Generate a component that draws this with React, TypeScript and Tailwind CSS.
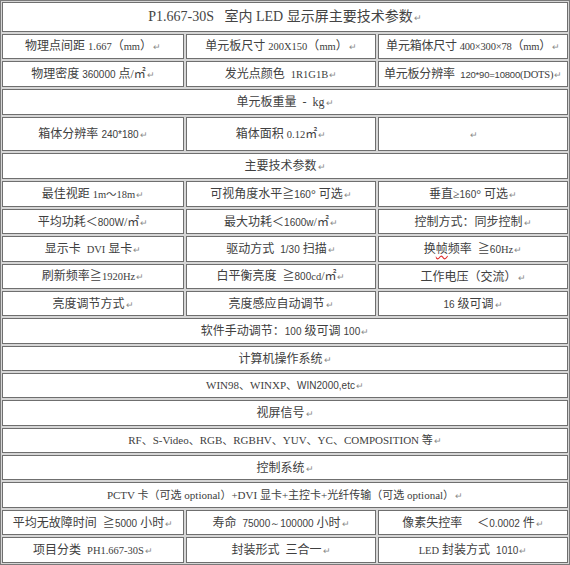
import React from "react";

const P = () => <span className="text-[9px] text-[#8a8a8a] ml-[1px] font-['Liberation_Sans',sans-serif]">↵</span>;

const S = ({ children }: { children: React.ReactNode }) => (
  <span className="font-['Liberation_Sans',sans-serif] text-[10px]">{children}</span>
);

const L = ({ children }: { children: React.ReactNode }) => (
  <span className="text-[10.5px]">{children}</span>
);

const C = ({ w, children, className = "" }: { w: string; children?: React.ReactNode; className?: string }) => (
  <div className={`${w} h-full flex items-center justify-center bg-white border border-[#6f6f6f] whitespace-pre ${className}`}>
    <span>{children}</span>
  </div>
);

const R = ({ h, children }: { h: string; children: React.ReactNode }) => (
  <div className={`flex gap-[2px] shrink-0 ${h}`}>{children}</div>
);

const W1 = "w-[182px] shrink-0";
const W2 = "w-[190px] shrink-0";
const W3 = "w-[190px] shrink-0";
const WF = "w-full";

export default function App() {
  return (
    <div className="w-[570px] h-[565px] bg-[#d6d6d6] border border-[#7a7a7a] p-[1px] flex flex-col gap-[2px] overflow-hidden text-[12px] leading-none text-[#404040] font-['Liberation_Serif','Noto_Sans_CJK_SC',serif]">
      <R h="h-[30px]">
        <C w={WF} className="text-[14px] text-[#444]">
          P1.667-30S{"\u00a0\u00a0\u00a0"}室内 LED 显示屏主要技术参数<P />
        </C>
      </R>
      <R h="h-[25px]">
        <C w={W1}>物理点间距 <L>1.667</L>（<L>mm</L>）<P /></C>
        <C w={W2}>单元板尺寸 <L>200X150</L>（<L>mm</L>）<P /></C>
        <C w={W3} className="tracking-[-0.2px]">单元箱体尺寸 <L>400×300×78</L>（<L>mm</L>）<P /></C>
      </R>
      <R h="h-[26px]">
        <C w={W1}>物理密度 <S>360000</S> 点/㎡<P /></C>
        <C w={W2}>发光点颜色  <L>1R1G1B</L><P /></C>
        <C w={W3} className="tracking-[-0.2px]">单元板分辨率  <span className="font-['Liberation_Sans',sans-serif] text-[9.5px]">120*90=10800</span><L>(DOTS)</L><P /></C>
      </R>
      <R h="h-[26px]">
        <C w={WF}>单元板重量  -  kg<P /></C>
      </R>
      <R h="h-[34px]">
        <C w={W1}>箱体分辨率 <S>240*180</S><P /></C>
        <C w={W2}>箱体面积 <L>0.12</L>㎡<P /></C>
        <C w={W3}><P /></C>
      </R>
      <R h="h-[26px]">
        <C w={WF}>主要技术参数<P /></C>
      </R>
      <R h="h-[26px]">
        <C w={W1}>最佳视距 <L>1m～18m</L><P /></C>
        <C w={W2}>可视角度水平≧<S>160</S>° 可选<P /></C>
        <C w={W3}>垂直≥<S>160</S>° 可选<P /></C>
      </R>
      <R h="h-[25px]">
        <C w={W1}>平均功耗＜<S>800W</S>/㎡<P /></C>
        <C w={W2}>最大功耗＜<S>1600w</S>/㎡<P /></C>
        <C w={W3}>控制方式：同步控制<P /></C>
      </R>
      <R h="h-[26px]">
        <C w={W1}>显示卡  <L>DVI</L> 显卡<P /></C>
        <C w={W2}>驱动方式  <S>1/30</S> 扫描<P /></C>
        <C w={W3}>
          换<span className="underline decoration-wavy decoration-[#e03030] underline-offset-2">帧</span>频率  ≧<S>60</S><L>Hz</L><P />
        </C>
      </R>
      <R h="h-[25px]">
        <C w={W1}>刷新频率≧<L>1920Hz</L><P /></C>
        <C w={W2}>白平衡亮度  ≧<S>800</S><L>cd</L>/㎡<P /></C>
        <C w={W3}>工作电压（交流）<P /></C>
      </R>
      <R h="h-[25px]">
        <C w={W1}>亮度调节方式<P /></C>
        <C w={W2}>亮度感应自动调节<P /></C>
        <C w={W3}><S>16</S> 级可调<P /></C>
      </R>
      <R h="h-[26px]">
        <C w={WF}>软件手动调节：<S>100</S> 级可调 <S>100</S><P /></C>
      </R>
      <R h="h-[25px]">
        <C w={WF}>计算机操作系统<P /></C>
      </R>
      <R h="h-[25px]">
        <C w={WF} className="text-[11px]">WIN98、WINXP、<S>WIN2000,etc</S><P /></C>
      </R>
      <R h="h-[26px]">
        <C w={WF}>视屏信号<P /></C>
      </R>
      <R h="h-[25px]">
        <C w={WF} className="text-[11px]">RF、S-Video、RGB、RGBHV、YUV、YC、COMPOSITION 等<P /></C>
      </R>
      <R h="h-[25px]">
        <C w={WF}>控制系统<P /></C>
      </R>
      <R h="h-[26px]">
        <C w={WF} className="text-[11px]">PCTV 卡（可选 optional）+DVI 显卡+主控卡+光纤传输（可选 optional）<P /></C>
      </R>
      <R h="h-[25px]">
        <C w={W1}>平均无故障时间  ≧<S>5000</S> 小时<P /></C>
        <C w={W2}>寿命  <S>75000～100000</S> 小时<P /></C>
        <C w={W3}>像素失控率     ＜<S>0.0002</S> 件<P /></C>
      </R>
      <R h="h-[26px]">
        <C w={W1}>项目分类  <L>PH1.667-30S</L><P /></C>
        <C w={W2}>封装形式  三合一<P /></C>
        <C w={W3}><L>LED</L> 封装方式  <S>1010</S><P /></C>
      </R>
    </div>
  );
}
